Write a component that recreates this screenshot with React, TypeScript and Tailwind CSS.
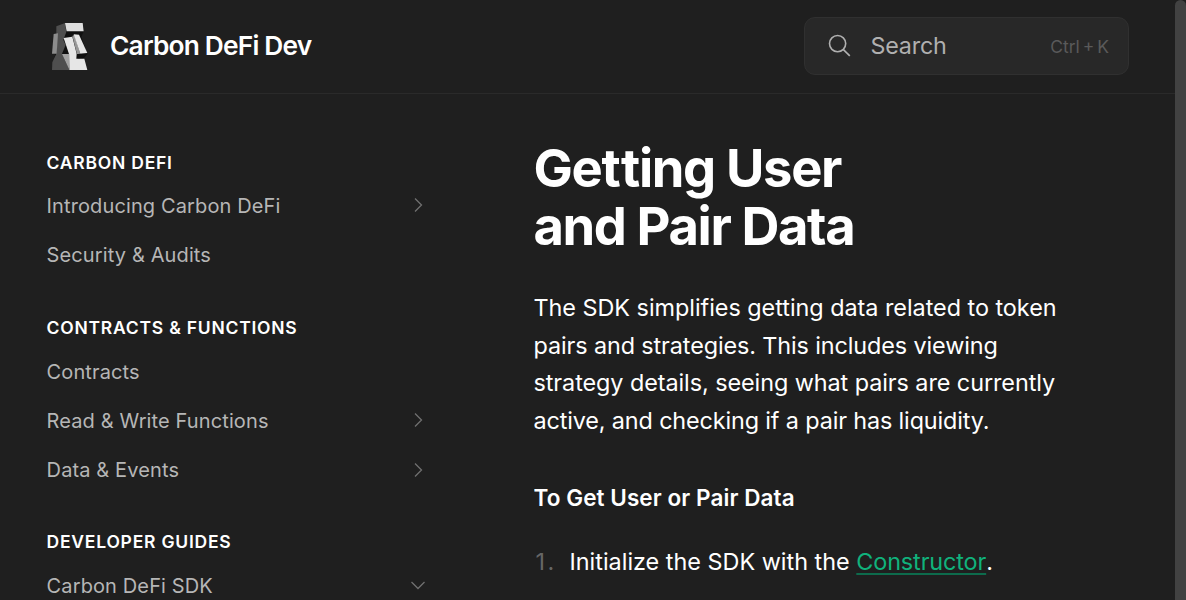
import React from "react";

function Logo() {
  return (
    <svg viewBox="30 36 114 144" className="h-12 w-[38px] shrink-0">
      <path d="M75 39 L128 39 L131 65 L124 80 L142 131 L130 145 L142 180 L36 180 L46 131 L60 62Z" fill="#101010" />
      <path d="M49 49 L75 39 L79 66 L70 90 L77 105 L66 131 L88 180 L36 180 L37 157 L49 131Z" fill="#4f4f4f" />
      <path d="M41 72 L54 70 L50 131 L36 131Z" fill="#8c8c8c" />
      <path d="M75 39 L128 39 L131 64 L80 64Z" fill="#dedede" />
      <path d="M71 84 L97 80 L110 131 L109 146 L133 146 L142 180 L88 180 L87 132Z" fill="#e6e6e6" />
      <path d="M97 78 L103 74 L121 131 L111 133Z" fill="#969696" />
      <path d="M101 73 L117 74 L142 129 L121 131Z" fill="#e6e6e6" />
      <path d="M111 132 L142 131 L132 143 L114 145Z" fill="#111111" />
      <path d="M66 132 L88 132 L88 180Z" fill="#a2a2a2" />
    </svg>
  );
}

function Chevron({ open }: { open?: boolean }) {
  return (
    <svg viewBox="0 0 18 18" className="mb-[2.4px] size-[18px]" fill="none" stroke="#707070" strokeWidth="1.3">
      <path d={open ? "M2.5 6 L9 12.5 L15.5 6" : "M6 2.5 L12.5 9 L6 15.5"} />
    </svg>
  );
}

function Section({ title }: { title: string }) {
  return (
    <h2 className="flex h-6 items-center text-[17.5px] font-semibold tracking-[0.77px] text-white">{title}</h2>
  );
}

function Item({ label, arrow, open }: { label: string; arrow?: boolean; open?: boolean }) {
  return (
    <a className="flex h-[49.3px] items-center justify-between text-[20px] tracking-[0.12px] text-[#b6b6b6]">
      <span className="pb-[1.2px]">{label}</span>
      {arrow && <Chevron open={open} />}
    </a>
  );
}

export default function App() {
  return (
    <div className="flex h-[600px] overflow-hidden bg-[#1f1f1f] font-['Inter',sans-serif] text-white">
      <div className="flex min-w-0 flex-1 flex-col">
        <header className="flex h-[94px] shrink-0 items-center justify-between border-b border-[#2a2a2a] pr-[46px] pb-[2px] pl-[50px]">
          <div className="flex items-center gap-[22px]">
            <Logo />
            <span className="text-[26.3px] font-semibold tracking-[-0.8px] whitespace-nowrap">Carbon DeFi Dev</span>
          </div>
          <div className="flex h-[58px] w-[325px] items-center rounded-[11px] border-[1.5px] border-[#303030] bg-[#282828] pr-[19px] pl-[22px]">
            <svg viewBox="0 0 24 24" className="size-6 shrink-0" fill="none" stroke="#b0b0b0" strokeWidth="1.6">
              <circle cx="10.6" cy="9.6" r="8.1" />
              <path d="M16.4 15.6 L22.8 21.9" />
            </svg>
            <span className="ml-[19.5px] pt-[2px] text-[23.3px] tracking-[-0.2px] text-[#b0b0b0]">Search</span>
            <span className="ml-auto pt-[3px] text-[17.5px] whitespace-nowrap text-[#5a5a5a] [word-spacing:-2px]">Ctrl + K</span>
          </div>
        </header>
        <div className="flex min-h-0 flex-1">
          <nav className="w-[427px] shrink-0 overflow-hidden pt-[57px] pl-[46.6px]">
            <Section title="CARBON DEFI" />
            <div className="mb-[34px] h-[107px] pt-[7px]">
              <Item label="Introducing Carbon DeFi" arrow />
              <Item label="Security & Audits" />
            </div>
            <Section title="CONTRACTS & FUNCTIONS" />
            <div className="mb-[34px] h-[156px] pt-[7.6px]">
              <Item label="Contracts" />
              <Item label="Read & Write Functions" arrow />
              <Item label="Data & Events" arrow />
            </div>
            <Section title="DEVELOPER GUIDES" />
            <div className="pt-[7.6px]">
              <Item label="Carbon DeFi SDK" arrow open />
            </div>
          </nav>
          <main className="ml-[106.5px] flex-1 overflow-hidden pt-[45px]">
            <h1 className="text-[52.5px] leading-[58px] font-bold tracking-[-1.4px]"><span className="tracking-[-1.35px]">Ge<span className="tracking-[0.3px]">t</span>ting User</span><br />and Pair Data</h1>
            <p className="mt-[34px] text-[23.4px] leading-[37.6px] whitespace-nowrap">
              <span className="tracking-[-0.03px]">The SDK simplifies getting data related to token</span><br />
              <span className="tracking-[-0.11px]">pairs and strategies. This includes viewing</span><br />
              <span className="tracking-[-0.07px]">strategy details, seeing what pairs are currently</span><br />
              <span className="tracking-[-0.14px]">active, and checking if a pair has liquidity.</span>
            </p>
            <h3 className="mt-[43px] text-[22.5px] leading-8 font-semibold tracking-[0.08px]">To Get User or Pair Data</h3>
            <ol className="mt-[29px] text-[23.4px] leading-[37.6px]">
              <li className="flex whitespace-nowrap">
                <span className="w-[36px] shrink-0 pl-[2px] tracking-[2.5px] text-[#666]">1.</span>
                <span>Initialize the SDK with the <a className="tracking-[-0.12px] text-[#10b27c] underline decoration-[#0d6b4c] decoration-2 underline-offset-[3px]">Constructor</a>.</span>
              </li>
            </ol>
          </main>
        </div>
      </div>
      <div className="h-[620px] w-[11px] shrink-0 rounded-full bg-[#424242]" />
    </div>
  );
}
